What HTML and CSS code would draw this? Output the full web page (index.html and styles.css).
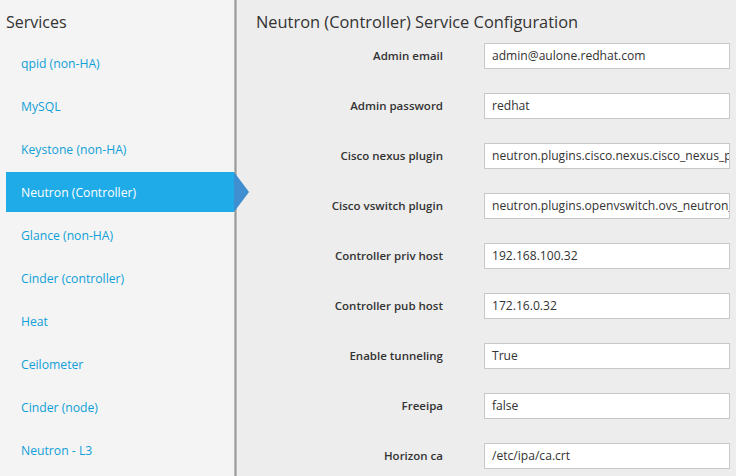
FILE: index.html
```html
<!DOCTYPE html>
<html>
<head>
<meta charset="utf-8">
<link rel="stylesheet" href="styles.css">
</head>
<body>
<div class="page">
  <aside class="sidebar">
    <h2 class="side-title">Services</h2>
    <ul class="nav">
      <li class="nav-item">qpid (non-HA)</li>
      <li class="nav-item">MySQL</li>
      <li class="nav-item">Keystone (non-HA)</li>
      <li class="nav-item active">Neutron (Controller)<span class="arrow"></span></li>
      <li class="nav-item">Glance (non-HA)</li>
      <li class="nav-item">Cinder (controller)</li>
      <li class="nav-item">Heat</li>
      <li class="nav-item">Ceilometer</li>
      <li class="nav-item">Cinder (node)</li>
      <li class="nav-item">Neutron - L3</li>
    </ul>
  </aside>
  <div class="divider"></div>
  <main class="content">
    <h1 class="title">Neutron (Controller) Service Configuration</h1>
    <div class="form">
      <label class="lbl">Admin email</label><div class="field">admin@aulone.redhat.com</div>
      <label class="lbl">Admin password</label><div class="field">redhat</div>
      <label class="lbl">Cisco nexus plugin</label><div class="field">neutron.plugins.cisco.nexus.cisco_nexus_plugin_v2.NexusPlugin</div>
      <label class="lbl">Cisco vswitch plugin</label><div class="field">neutron.plugins.openvswitch.ovs_neutron_plugin.OVSNeutronPluginV2</div>
      <label class="lbl">Controller priv host</label><div class="field">192.168.100.32</div>
      <label class="lbl">Controller pub host</label><div class="field">172.16.0.32</div>
      <label class="lbl">Enable tunneling</label><div class="field">True</div>
      <label class="lbl">Freeipa</label><div class="field">false</div>
      <label class="lbl">Horizon ca</label><div class="field">/etc/ipa/ca.crt</div>
    </div>
  </main>
</div>
</body>
</html>
```
FILE: styles.css
```css
* { box-sizing: border-box; }
html, body { margin: 0; padding: 0; }
body {
  width: 736px;
  height: 476px;
  overflow: hidden;
  font-family: "Open Sans", "Noto Sans", sans-serif;
  background: #ededed;
  color: #333;
}
.page {
  display: flex;
  height: 476px;
}
.sidebar {
  width: 234px;
  flex: none;
  background: #f4f4f4;
  padding-left: 6px;
  position: relative;
}
.side-title {
  margin: 0;
  font-weight: 400;
  font-size: 16px;
  line-height: 20px;
  padding-top: 12px;
  color: #333;
}
.nav {
  list-style: none;
  margin: 0;
  padding: 0;
  padding-top: 11px;
}
.nav-item {
  height: 40px;
  margin-bottom: 3px;
  padding-left: 15px;
  display: flex;
  align-items: center;
  font-size: 12.2px;
  color: #119fd8;
  position: relative;
}
.nav-item.active {
  background: #1eabe7;
  color: #fff;
}
.arrow {
  position: absolute;
  right: -15px;
  top: 0;
  width: 0;
  height: 0;
  border-top: 20px solid transparent;
  border-bottom: 20px solid transparent;
  border-left: 15px solid #3e8ed0;
  z-index: 2;
}
.divider {
  width: 3px;
  flex: none;
  background: linear-gradient(to right, #c8c8c8, #9a9a9a, #cfcfcf);
}
.content {
  flex: 1;
  padding-left: 19px;
  padding-right: 6px;
}
.title {
  margin: 0;
  font-weight: 400;
  font-size: 16.4px;
  line-height: 20px;
  padding-top: 12px;
  color: #333;
}
.form {
  display: grid;
  grid-template-columns: 187px 246px;
  column-gap: 41px;
  row-gap: 24px;
  margin-top: 11px;
}
.lbl {
  text-align: right;
  font-size: 11.5px;
  font-weight: 600;
  line-height: 26px;
  color: #333;
}
.field {
  height: 26px;
  background: #fff;
  border: 1px solid #c8c8c8;
  padding: 0 7px;
  font-size: 12.1px;
  line-height: 24px;
  color: #333;
  white-space: nowrap;
  overflow: hidden;
  text-overflow: clip;
}
```
